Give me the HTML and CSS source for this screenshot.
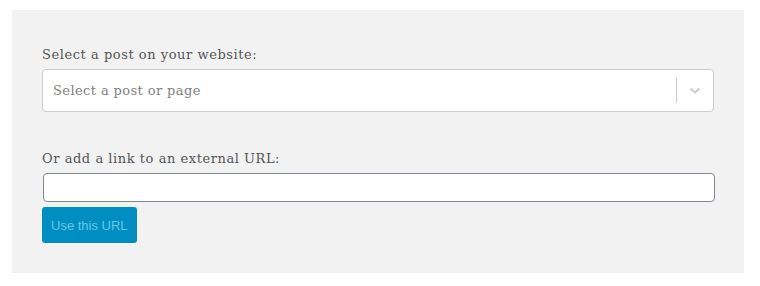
FILE: index.html
```html
<!DOCTYPE html>
<html lang="en">
<head>
    <meta charset="UTF-8">
    <title>Link picker</title>
    <link rel="stylesheet" href="styles.css">
</head>
<body>
    <div class="panel">
        <div class="field">
            <label class="field-label">Select a post on your website:</label>
            <div class="select-box">
                <span class="select-placeholder">Select a post or page</span>
                <span class="select-sep"></span>
                <span class="select-arrow">
                    <svg width="12" height="8" viewBox="0 0 12 8"><path d="M1.5 1.5 L6 5.5 L10.5 1.5" fill="none" stroke="#ccc" stroke-width="2"/></svg>
                </span>
            </div>
        </div>
        <div class="field field-url">
            <label class="field-label" for="url">Or add a link to an external URL:</label>
            <input id="url" class="url-input" type="text">
            <button class="url-button" disabled>Use this URL</button>
        </div>
    </div>
</body>
</html>
```

FILE: styles.css
```css
body {
    margin: 0;
    padding: 10px 16px 14px 12px;
    background: #fff;
}

.panel {
    background: #f2f2f2;
    padding: 36px 30px 30px 30px;
    font-family: "DejaVu Serif", serif;
    color: #555;
}

.field-label {
    display: block;
    font-size: 13px;
    letter-spacing: 0.55px;
    line-height: 18px;
    margin-bottom: 5px;
}

.select-box {
    display: flex;
    align-items: center;
    height: 41px;
    background: #fff;
    border: 1px solid #ccc;
    border-radius: 4px;
}

.select-placeholder {
    flex: 1;
    padding-left: 10px;
    font-size: 13px;
    letter-spacing: 0.4px;
    color: #808080;
}

.select-sep {
    width: 1px;
    height: 25px;
    background: #ccc;
}

.select-arrow {
    display: flex;
    width: 36px;
    justify-content: center;
}

.field-url {
    margin-top: 38px;
}

.url-input {
    display: block;
    box-sizing: border-box;
    width: 100%;
    margin-left: 1px;
    height: 29px;
    border: 1px solid #7e8993;
    border-radius: 4px;
    background: #fff;
}

.url-button {
    margin-top: 5px;
    height: 36px;
    padding: 0 9px;
    border: none;
    border-radius: 3px;
    background: #008ec2;
    color: #66c6e4;
    font-family: "Liberation Sans", Arial, sans-serif;
    font-size: 13px;
}
```
